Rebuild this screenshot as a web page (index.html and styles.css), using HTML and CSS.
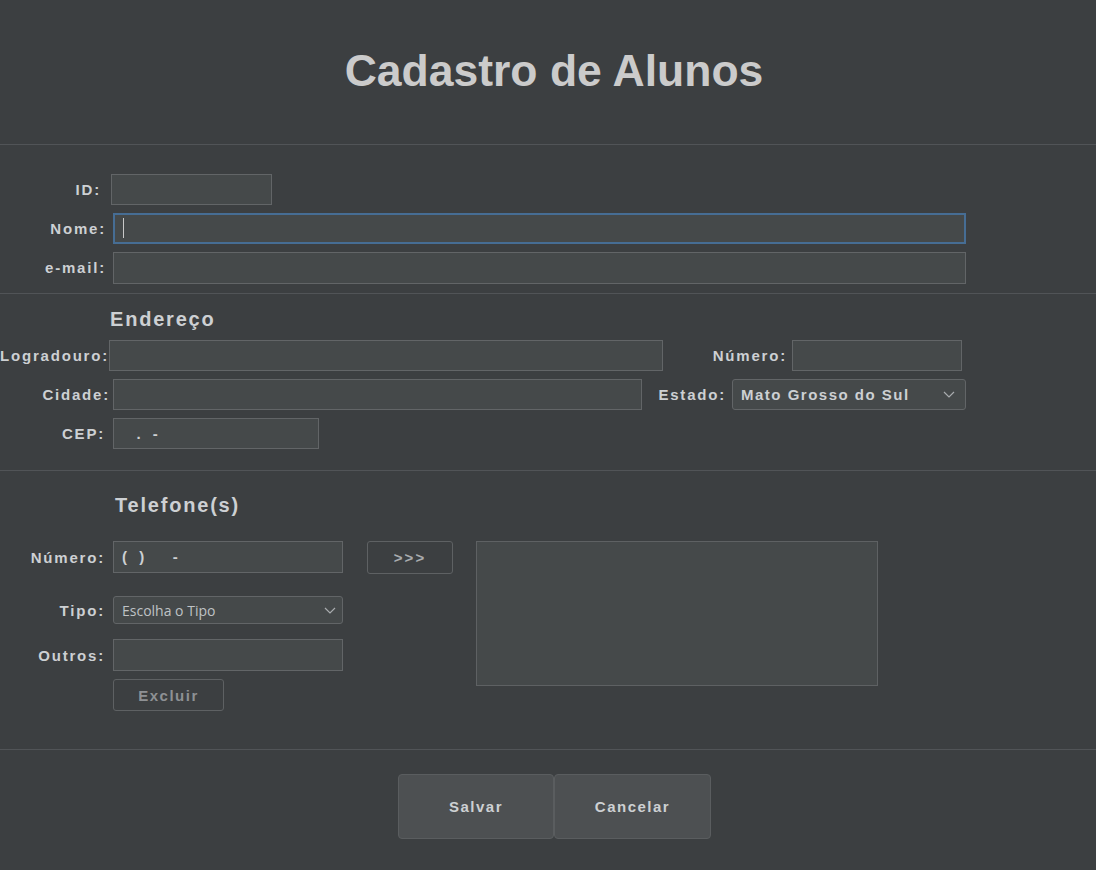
FILE: index.html
```html
<!DOCTYPE html>
<html lang="pt">
<head>
<meta charset="utf-8">
<title>Cadastro de Alunos</title>
<link rel="stylesheet" href="styles.css">
</head>
<body>
<div class="app">
  <header class="header"><h1 class="title">Cadastro de Alunos</h1></header>

  <section class="sec sec-main">
    <div class="row row-id">
      <span class="lbl w-id">ID:</span>
      <div class="field f-id"></div>
    </div>
    <div class="row row-nome">
      <span class="lbl w-nome">Nome:</span>
      <div class="field field-focus f-wide"><span class="caret"></span></div>
    </div>
    <div class="row row-email">
      <span class="lbl w-nome">e-mail:</span>
      <div class="field f-wide f-tall"></div>
    </div>
  </section>

  <section class="sec sec-end">
    <h2 class="heading h-end">Endereço</h2>
    <div class="row row-log">
      <span class="lbl w-log">Logradouro:</span>
      <div class="field f-log"></div>
      <span class="lbl w-numero">Número:</span>
      <div class="field f-numero"></div>
    </div>
    <div class="row row-cid">
      <span class="lbl w-cid">Cidade:</span>
      <div class="field f-cid"></div>
      <span class="lbl w-estado">Estado:</span>
      <div class="combo c-estado">
        <span class="combo-text">Mato Grosso do Sul</span>
        <svg class="chev" width="12" height="7" viewBox="0 0 12 7"><path d="M1 1 L6 6 L11 1" fill="none" stroke="#a9acaf" stroke-width="1.2"/></svg>
      </div>
    </div>
    <div class="row row-cep">
      <span class="lbl w-cep">CEP:</span>
      <div class="field f-cep"><span class="mask">   .  -</span></div>
    </div>
  </section>

  <section class="sec sec-tel">
    <h2 class="heading h-tel">Telefone(s)</h2>
    <div class="tel-body">
      <div class="tel-left">
        <div class="row row-tnum">
          <span class="lbl w-tel">Número:</span>
          <div class="field f-tel f-tall"><span class="mask mask-tel">(  )     -</span></div>
        </div>
        <div class="row row-tipo">
          <span class="lbl w-tel">Tipo:</span>
          <div class="combo c-tipo">
            <span class="combo-text plain">Escolha o Tipo</span>
            <svg class="chev" width="12" height="7" viewBox="0 0 12 7"><path d="M1 1 L6 6 L11 1" fill="none" stroke="#a9acaf" stroke-width="1.2"/></svg>
          </div>
        </div>
        <div class="row row-outros">
          <span class="lbl w-tel">Outros:</span>
          <div class="field f-tel f-tall"></div>
        </div>
        <div class="row row-excluir">
          <button class="btn btn-excluir" disabled>Excluir</button>
        </div>
      </div>
      <button class="btn btn-add">&gt;&gt;&gt;</button>
      <div class="listbox"></div>
    </div>
  </section>

  <footer class="actions">
    <button class="btn btn-big">Salvar</button>
    <button class="btn btn-big">Cancelar</button>
  </footer>
</div>
</body>
</html>
```

FILE: styles.css
```css
* { box-sizing: border-box; }
html, body { margin: 0; padding: 0; }
body {
  background: #3c3f41;
  width: 1096px;
  height: 870px;
  overflow: hidden;
  font-family: "Liberation Sans", Arial, sans-serif;
  color: #cdd0d3;
}
.app { width: 1096px; height: 870px; }

.header {
  height: 145px;
  border-bottom: 1px solid #515457;
  display: flex;
  align-items: flex-start;
  justify-content: center;
}
.title {
  margin: 45px 0 0 12px;
  font-size: 44.5px;
  line-height: 52px;
  font-weight: bold;
  color: #cbcbcb;
}

.sec { border-bottom: 1px solid #515457; }
.sec-main { padding: 29px 0 0; height: 149px; }
.sec-end { padding: 13px 0 0; height: 177px; }
.sec-tel { padding: 22px 0 0; height: 279px; }

.row { display: flex; align-items: center; }
.lbl {
  display: block;
  font-size: 15px;
  font-weight: bold;
  letter-spacing: 1.8px;
  text-align: right;
  white-space: nowrap;
  color: #cdd0d3;
}

.field {
  height: 31px;
  background: #45494a;
  border: 1px solid #626567;
  position: relative;
}
.f-tall { height: 32px; }
.field-focus { border: 2px solid #466d94; }

.caret {
  position: absolute;
  left: 8px;
  top: 3px;
  width: 1px;
  height: 20px;
  background: #c8c8c8;
}

.mask {
  display: block;
  white-space: pre;
  font-size: 15px;
  font-weight: bold;
  letter-spacing: 1.3px;
  line-height: 29px;
  padding-left: 6px;
  color: #cdd0d3;
}
.mask-tel { padding-left: 8px; line-height: 30px; }

/* section 1 */
.row-id { height: 31px; }
.w-id { width: 101px; }
.f-id { width: 161px; margin-left: 10px; }
.row-nome { margin-top: 8px; height: 31px; }
.w-nome { width: 106px; }
.f-wide { width: 853px; margin-left: 7px; }
.row-email { margin-top: 7px; height: 33px; }

/* headings */
.heading {
  margin: 0;
  font-size: 20px;
  line-height: 24px;
  font-weight: bold;
  letter-spacing: 1.8px;
  color: #cdd0d3;
}
.h-end { margin-left: 110px; }
.h-tel { margin-left: 115px; }

/* section 2 */
.row-log { margin-top: 9px; height: 31px; }
.w-log { width: 109px; }
.f-log { width: 554px; margin-left: 0; }
.w-numero { width: 124px; }
.f-numero { width: 170px; margin-left: 5px; }

.row-cid { margin-top: 8px; height: 31px; }
.w-cid { width: 110px; }
.f-cid { width: 529px; margin-left: 3px; }
.w-estado { width: 84px; }

.combo {
  display: flex;
  align-items: center;
  justify-content: space-between;
  background: #45494a;
  border: 1px solid #626567;
  border-radius: 3px;
}
.c-estado { width: 234px; height: 31px; margin-left: 6px; padding: 0 10px 0 8px; }
.combo-text {
  font-size: 15px;
  font-weight: bold;
  letter-spacing: 1.5px;
  color: #cdd0d3;
  white-space: nowrap;
}
.combo-text.plain {
  font-family: "Open Sans", "Noto Sans", sans-serif;
  font-weight: normal;
  font-size: 14px;
  letter-spacing: 0;
  color: #bfc2c5;
}

.row-cep { margin-top: 8px; height: 31px; }
.w-cep { width: 105px; }
.f-cep { width: 206px; margin-left: 8px; }

/* section 3 */
.tel-body {
  display: flex;
  align-items: flex-start;
  margin-top: 24px;
}
.tel-left { width: 343px; }
.w-tel { width: 105px; }
.f-tel { width: 230px; margin-left: 8px; }
.row-tnum { height: 32px; }
.row-tipo { margin-top: 23px; height: 28px; }
.c-tipo { width: 230px; height: 28px; margin-left: 8px; padding: 0 6px 0 8px; }
.row-outros { margin-top: 15px; height: 32px; }
.row-excluir { margin-top: 8px; padding-left: 113px; }

.btn {
  font-family: "Liberation Sans", Arial, sans-serif;
  font-size: 15px;
  font-weight: bold;
  letter-spacing: 1.5px;
  color: #cdd0d3;
  background: #3c3f41;
  border: 1px solid #5e6163;
  border-radius: 3px;
  padding: 0;
  margin: 0;
}
.btn-excluir { width: 111px; height: 32px; color: #8e9194; }
.btn-add { width: 86px; height: 33px; margin-left: 24px; color: #a9acaf; letter-spacing: 2px; }
.listbox {
  width: 402px;
  height: 145px;
  margin-left: 23px;
  background: #45494a;
  border: 1px solid #5e6163;
}

/* footer */
.actions {
  display: flex;
  padding: 24px 0 0 398px;
}
.btn-big {
  width: 156px;
  height: 65px;
  background: #4d5052;
  border-color: #5a5d5f;
  border-radius: 4px;
}
.btn-big + .btn-big { width: 157px; margin-left: 0; }
```
